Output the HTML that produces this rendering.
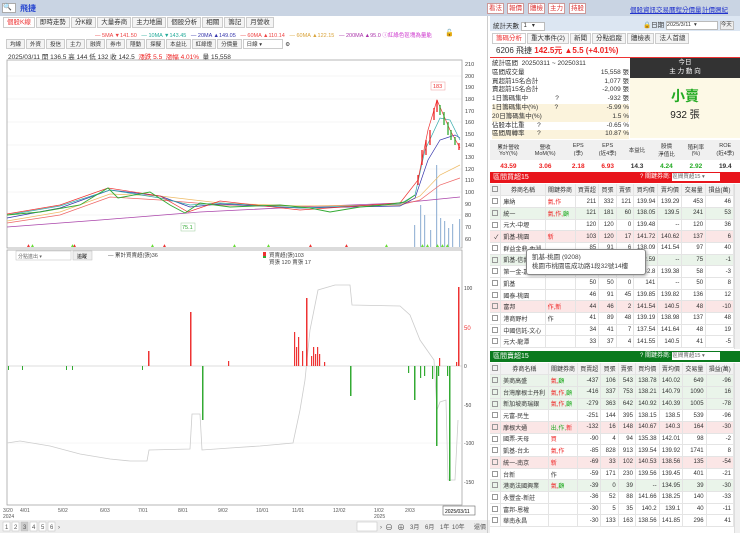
<!DOCTYPE html>
<html><head><meta charset="utf-8"><style>
*{box-sizing:border-box;margin:0;padding:0}
body{width:740px;height:533px;overflow:hidden;background:#fff;font-family:"Liberation Sans","Noto Sans CJK TC",sans-serif;font-size:7px;color:#333;position:relative}
.a{position:absolute}
.btn{position:absolute;top:3px;height:11px;border:1px solid #c99;background:#fff;color:#d33;font-size:6.5px;line-height:9px;text-align:center}
.lk{position:absolute;top:4px;color:#23c;text-decoration:underline;font-size:6.5px}
.tab{display:inline-block;border:1px solid #ccc;background:#f4f4f4;padding:0 3px;height:11px;line-height:10px;font-size:6.5px;margin-right:1px}
table{border-collapse:collapse;width:100%}
td{height:11.7px;font-size:6px;border-right:1px solid #e4e4e4;border-bottom:1px solid #e4e4e4;text-align:right;padding:0 2px;white-space:nowrap}
td.l{text-align:left}
tr.h td{background:#f2f2f2;text-align:center}
.cb{display:inline-block;width:6px;height:6px;border:1px solid #999;vertical-align:middle}
.g{background:#eaf4ea}.p{background:#fbe6e6}
.r{color:#e22}.gr{color:#2a2}
</style></head><body>
<!-- top bar -->
<div class="a" style="left:0;top:0;width:740px;height:16px;background:#c9d4e3"></div>
<div class="a" style="left:2px;top:3px;width:14px;height:10px;background:#fff;border:1px solid #aaa;font-size:7px;line-height:8px">🔍</div>
<div class="a" style="left:20px;top:3px;color:#2746d0;font-size:8px;font-weight:bold">飛捷</div>
<div class="btn" style="left:487px;width:17px">看法</div>
<div class="btn" style="left:507px;width:17px">報價</div>
<div class="btn" style="left:528px;width:17px">體檢</div>
<div class="btn" style="left:548px;width:17px">主力</div>
<div class="btn" style="left:569px;width:17px">持股</div>
<div class="lk" style="left:630px">個股資訊</div>
<div class="lk" style="left:656px">交易曆程</div>
<div class="lk" style="left:682px">分價量</div>
<div class="lk" style="left:702px">計價週紀</div>

<!-- left tabs -->
<div class="a" style="left:3px;top:17px;white-space:nowrap">
<span class="tab" style="background:#fff;color:#e33">個股K線</span><span class="tab">即時走勢</span><span class="tab">分K線</span><span class="tab">大量券商</span><span class="tab">主力地圖</span><span class="tab">個股分析</span><span class="tab">相關</span><span class="tab">籌記</span><span class="tab">月營收</span></div>
<div class="a" style="left:95px;top:31px;font-size:5.5px;white-space:nowrap"><span style="color:#e44">— 5MA ▼141.50</span> &nbsp; <span style="color:#2a9">— 10MA ▼143.45</span> &nbsp; <span style="color:#33a">— 20MA ▲149.05</span> &nbsp; <span style="color:#e44">— 60MA ▲110.14</span> &nbsp; <span style="color:#d9a33a">— 60MA ▲122.15</span> &nbsp; <span style="color:#a3a">— 200MA ▲95.0</span> <span style="color:#c3c">ⓘ紅綠色區塊為量能</span></div>
<div class="a" style="left:111px;top:30px;width:0"></div>
<div class="a" style="left:445px;top:29px;font-size:7px">🔓</div>
<div class="a" style="left:6px;top:39px;white-space:nowrap;font-size:5.5px">
<span class="tab" style="height:10px;font-size:5.5px">均線</span><span class="tab" style="height:10px;font-size:5.5px">外資</span><span class="tab" style="height:10px;font-size:5.5px">投信</span><span class="tab" style="height:10px;font-size:5.5px">主力</span><span class="tab" style="height:10px;font-size:5.5px">融資</span><span class="tab" style="height:10px;font-size:5.5px">券市</span><span class="tab" style="height:10px;font-size:5.5px">隱動</span><span class="tab" style="height:10px;font-size:5.5px">探擬</span><span class="tab" style="height:10px;font-size:5.5px">本益比</span><span class="tab" style="height:10px;font-size:5.5px">紅綠燈</span><span class="tab" style="height:10px;font-size:5.5px">分價量</span><span class="tab" style="height:10px;font-size:5.5px;width:40px;background:#fff">日線 ▾</span> ⚙</div>
<div class="a" style="left:8px;top:51px;font-size:6.5px;white-space:nowrap">2025/03/11 開 136.5 高 144 低 132 收 142.5 &nbsp;<span class="r">漲跌 5.5 &nbsp;漲幅 4.01%</span> &nbsp;量 15,558</div>

<!-- charts -->
<svg class="a" style="left:0;top:58px" width="490" height="475" viewBox="0 58 490 475">
<g stroke="#eee" stroke-width="0.6">
<line x1="7" y1="76" x2="462" y2="76"/><line x1="7" y1="99" x2="462" y2="99"/><line x1="7" y1="122" x2="462" y2="122"/><line x1="7" y1="145" x2="462" y2="145"/><line x1="7" y1="169" x2="462" y2="169"/><line x1="7" y1="192" x2="462" y2="192"/><line x1="7" y1="215" x2="462" y2="215"/>
</g>
<rect x="7" y="60" width="455" height="188" fill="none" stroke="#999" stroke-width="0.7"/>
<g font-size="5.5" fill="#444">
<text x="465" y="66">210</text><text x="465" y="78">200</text><text x="465" y="89">190</text><text x="465" y="101">180</text><text x="465" y="113">170</text><text x="465" y="124">160</text><text x="465" y="136">150</text><text x="465" y="147">140</text><text x="465" y="159">130</text><text x="465" y="171">120</text><text x="465" y="182">110</text><text x="465" y="194">100</text><text x="465" y="206">90</text><text x="465" y="217">80</text><text x="465" y="229">70</text><text x="465" y="241">60</text>
</g>
<!-- volume bars -->
<g fill="#9cb8d8"><rect x="414" y="225" width="1.2" height="22"/><rect x="420" y="205" width="1.2" height="42"/><rect x="424" y="215" width="1.2" height="32"/><rect x="436" y="165" width="1.2" height="82"/><rect x="440" y="218" width="1.2" height="29"/><rect x="444" y="221" width="1.2" height="26"/><rect x="448" y="228" width="1.2" height="19"/><rect x="452" y="224" width="1.2" height="23"/><rect x="459" y="219" width="1.2" height="28"/><rect x="430" y="230" width="1.2" height="17"/></g>
<!-- MAs -->
<polyline fill="none" stroke="#a4a" stroke-width="0.8" points="7,227 100,220 200,212 300,207 400,203 430,200 460,197"/>
<polyline fill="none" stroke="#e66" stroke-width="0.7" points="7,223 60,215 110,197 160,200 220,205 300,206 400,205 420,200 440,185 460,178"/>
<polyline fill="none" stroke="#eb6" stroke-width="0.7" points="7,221 60,212 110,194 160,196 220,203 300,206 400,205 420,196 440,175 460,165"/>
<polyline fill="none" stroke="#33a" stroke-width="0.7" points="7,218 60,208 110,190 160,196 190,207 220,204 300,208 400,206 415,198 428,160 440,140 455,135 460,138"/>
<polyline fill="none" stroke="#3aa" stroke-width="0.7" points="7,215 60,206 110,190 160,198 190,205 220,203 300,208 400,204 415,195 425,150 440,118 450,120 460,140"/>
<polyline fill="none" stroke="#e33" stroke-width="0.7" points="7,214 60,205 108,188 160,196 188,212 220,201 300,210 400,203 418,180 428,130 437,100 450,130 460,148"/>
<!-- candles -->
<g stroke-width="1.3">
<polyline fill="none" stroke="#3a3" stroke-width="0.9" points="7,215 40,212 80,205 108,188 118,198 150,192 170,205 185,213 200,203 230,207 280,205 310,208 330,212 360,207 385,205 405,202 415,195"/>
<line x1="418" x2="418" y1="185" y2="175" stroke="#e22"/><line x1="422" x2="422" y1="165" y2="150" stroke="#e22"/><line x1="426" x2="426" y1="155" y2="140" stroke="#e22"/><line x1="430" x2="430" y1="145" y2="130" stroke="#e22"/><line x1="434" x2="434" y1="120" y2="108" stroke="#e22"/><line x1="437" x2="437" y1="112" y2="100" stroke="#e22"/><line x1="440" x2="440" y1="105" y2="115" stroke="#3a3"/><line x1="444" x2="444" y1="112" y2="125" stroke="#3a3"/><line x1="448" x2="448" y1="122" y2="135" stroke="#3a3"/><line x1="451" x2="451" y1="130" y2="140" stroke="#3a3"/><line x1="455" x2="455" y1="137" y2="145" stroke="#3a3"/><line x1="459" x2="459" y1="143" y2="150" stroke="#e22"/>
</g>
<rect x="431" y="82" width="14" height="8" fill="#fff" stroke="#e99" stroke-width="0.5"/><text x="433" y="88" font-size="5.5" fill="#e33">183</text>
<rect x="181" y="223" width="14" height="8" fill="#fff" stroke="#9c9" stroke-width="0.5"/><text x="182" y="229" font-size="5.5" fill="#3a3">75.1</text>
<g font-size="5" fill="#e33"><text x="26" y="247">▲</text><text x="72" y="247">▲</text><text x="162" y="247">▲</text><text x="308" y="247">▲</text><text x="344" y="247">▲</text></g>
<g font-size="5" fill="#6d3"><text x="30" y="247">▲</text><text x="70" y="247">▲</text><text x="150" y="247">▲</text><text x="232" y="247">▲</text><text x="266" y="247">▲</text><text x="384" y="247">▲</text><text x="420" y="247">▲▲</text><text x="435" y="247">▲▲▲</text></g>
<!-- lower chart -->
<rect x="7" y="250" width="455" height="255" fill="none" stroke="#999" stroke-width="0.7"/>
<line x1="7" y1="366" x2="462" y2="366" stroke="#bbb" stroke-width="0.5"/>
<line x1="7" y1="443" x2="462" y2="443" stroke="#eee" stroke-width="0.5"/>
<polyline fill="none" stroke="#ccc" stroke-width="0.8" points="7,443 20,441 50,446 80,454 110,459 130,461 147,461 149,450 190,449 192,414 200,414 202,450 230,448 260,446 293,443 300,410 305,380 310,330 318,290 335,285 350,285 352,305 400,306 410,315 420,340 434,360 437,410 440,402 446,400 448,480 455,480 458,420"/>
<g fill="#e33"><rect x="148" y="351" width="1.5" height="15"/><rect x="190" y="312" width="1.5" height="54"/><rect x="228" y="361" width="1.2" height="5"/><rect x="294" y="332" width="1.2" height="34"/><rect x="296" y="347" width="1.2" height="19"/><rect x="298" y="337" width="1.2" height="29"/><rect x="302" y="351" width="1.2" height="15"/><rect x="306" y="298" width="1.5" height="68"/><rect x="311" y="356" width="1.2" height="10"/><rect x="313" y="347" width="1.2" height="19"/><rect x="315" y="354" width="1.2" height="12"/><rect x="317" y="347" width="1.2" height="19"/><rect x="319" y="354" width="1.2" height="12"/><rect x="324" y="362" width="1.2" height="4"/><rect x="439" y="358" width="1.2" height="8"/><rect x="458" y="287" width="1.5" height="79"/><rect x="456" y="362" width="1.2" height="4"/></g>
<g fill="#3a3"><rect x="202" y="366" width="1.5" height="54"/><rect x="350" y="366" width="1.5" height="30"/><rect x="408" y="366" width="1.2" height="7"/><rect x="414" y="366" width="1.5" height="34"/><rect x="420" y="366" width="1.2" height="12"/><rect x="424" y="366" width="1.2" height="10"/><rect x="432" y="366" width="1.2" height="13"/><rect x="436" y="366" width="1.5" height="80"/><rect x="438" y="366" width="1.2" height="10"/><rect x="449" y="366" width="1.5" height="115"/><rect x="447" y="366" width="1.2" height="10"/><rect x="8" y="366" width="1" height="4"/><rect x="22" y="366" width="1" height="4"/><rect x="66" y="366" width="1" height="4"/><rect x="72" y="366" width="1" height="4"/><rect x="142" y="366" width="1" height="4"/></g>
<g font-size="5" fill="#444"><text x="464" y="290">100</text><text x="464" y="330" fill="#e33" font-size="6">50</text><text x="464" y="368">0</text><text x="464" y="407">-50</text><text x="464" y="445">-100</text><text x="464" y="484">-150</text></g>
<rect x="16" y="251" width="55" height="9" fill="#fff" stroke="#bbb" stroke-width="0.5"/><text x="18" y="258" font-size="5" fill="#666">分點進出 ▾</text>
<rect x="73" y="251" width="19" height="9" fill="#eee" stroke="#bbb" stroke-width="0.5"/><text x="77" y="258" font-size="5">追蹤</text>
<text x="108" y="257" font-size="5.5" fill="#444">— 累計買賣超(張)36</text>
<rect x="263" y="252" width="3" height="5" fill="#e33"/><rect x="263" y="256" width="3" height="2" fill="#3a3"/>
<text x="269" y="257" font-size="5.5" fill="#444">買賣超(張)103</text><text x="269" y="264" font-size="5.5" fill="#444">買張 120 賣張 17</text>
<g font-size="5" fill="#555"><text x="3" y="512">3/20</text><text x="3" y="518">2024</text><text x="20" y="512">4/01</text><text x="58" y="512">5/02</text><text x="100" y="512">6/03</text><text x="138" y="512">7/01</text><text x="178" y="512">8/01</text><text x="218" y="512">9/02</text><text x="256" y="512">10/01</text><text x="292" y="512">11/01</text><text x="333" y="512">12/02</text><text x="374" y="512">1/02</text><text x="374" y="518">2025</text><text x="405" y="512">2/03</text></g>
<rect x="443" y="506" width="32" height="9" fill="#fff" stroke="#666" stroke-width="0.6"/><text x="445" y="513" font-size="5">2025/03/11</text>
<rect x="0" y="520" width="490" height="13" fill="#eee"/>
<g font-size="6" fill="#555"><rect x="3" y="522" width="7" height="9" fill="#fff" stroke="#bbb" stroke-width="0.5"/><text x="5" y="529">1</text><rect x="12" y="522" width="7" height="9" fill="#fff" stroke="#bbb" stroke-width="0.5"/><text x="14" y="529">2</text><rect x="21" y="522" width="7" height="9" fill="#ccc" stroke="#bbb" stroke-width="0.5"/><text x="23" y="529">3</text><rect x="30" y="522" width="7" height="9" fill="#fff" stroke="#bbb" stroke-width="0.5"/><text x="32" y="529">4</text><rect x="39" y="522" width="7" height="9" fill="#fff" stroke="#bbb" stroke-width="0.5"/><text x="41" y="529">5</text><rect x="48" y="522" width="7" height="9" fill="#fff" stroke="#bbb" stroke-width="0.5"/><text x="50" y="529">6</text><text x="58" y="529">›</text>
<rect x="357" y="522" width="20" height="9" fill="#fff" stroke="#bbb" stroke-width="0.5"/><text x="380" y="529">›</text><text x="385" y="530" font-size="8">⊖</text><text x="397" y="530" font-size="8">⊕</text><text x="410" y="529">3月</text><text x="425" y="529">6月</text><text x="440" y="529">1年</text><text x="452" y="529">10年</text><text x="474" y="529">還價</text></g>
</svg>
<div class="a" style="left:487px;top:16px;width:1px;height:517px;background:#ccc"></div>

<!-- right panel -->
<div class="a" style="left:490px;top:16px;width:250px;height:15px;background:#dce6f2"></div>
<div class="a" style="left:493px;top:20px;font-size:6.5px">統計天數 <span style="display:inline-block;width:24px;height:9px;background:#fff;border:1px solid #bbb;font-size:6px;vertical-align:middle;line-height:7px">&nbsp;1 &nbsp; ▾</span></div>
<div class="a" style="left:643px;top:19px;font-size:6.5px">🔒日期 <span style="display:inline-block;width:52px;height:9px;background:#fff;border:1px solid #bbb;font-size:5.5px;vertical-align:middle;line-height:7px">2025/3/11 &nbsp;▾</span> <span style="display:inline-block;width:14px;height:9px;background:#eee;border:1px solid #bbb;font-size:5.5px;vertical-align:middle;line-height:7px">今天</span></div>
<div class="a" style="left:492px;top:33px;white-space:nowrap"><span class="tab" style="background:#fff;color:#e33">籌碼分析</span><span class="tab">重大事件(2)</span><span class="tab">新聞</span><span class="tab">分點追蹤</span><span class="tab">體檢表</span><span class="tab">法人首總</span></div>
<div class="a" style="left:490px;top:45px;width:250px;height:13px;border-bottom:1.5px solid #e33;font-size:8px;padding-left:6px;line-height:12px">6206 飛捷 <span class="r" style="font-weight:bold">142.5元 ▲5.5 (+4.01%)</span></div>
<div class="a" style="left:492px;top:60px;width:137px;font-size:6.5px;line-height:8.8px">
<div>統計區間 &nbsp;20250311 ~ 20250311</div>
<div style="display:flex;justify-content:space-between"><span>區間成交量</span><span>15,558 張</span></div>
<div style="display:flex;justify-content:space-between"><span>買超前15名合計</span><span>1,077 張</span></div>
<div style="display:flex;justify-content:space-between"><span>賣超前15名合計</span><span>-2,009 張</span></div>
<div style="display:flex;justify-content:space-between"><span>1日籌碼集中 &nbsp; &nbsp; &nbsp; &nbsp; &nbsp; &nbsp; &nbsp; ?</span><span>-932 張</span></div>
<div style="display:flex;justify-content:space-between;background:#fbf3dc"><span>1日籌碼集中(%) &nbsp; &nbsp; &nbsp; &nbsp; ?</span><span>-5.99 %</span></div>
<div style="display:flex;justify-content:space-between;background:#fbf3dc"><span>20日籌碼集中(%)</span><span>1.5 %</span></div>
<div style="display:flex;justify-content:space-between"><span>佔股本比重 &nbsp; &nbsp; &nbsp; ?</span><span>-0.65 %</span></div>
<div style="display:flex;justify-content:space-between;background:#fbf3dc"><span>區間周轉率 &nbsp; &nbsp; &nbsp; ?</span><span>10.87 %</span></div>
</div>
<div class="a" style="left:630px;top:58px;width:110px;height:20px;background:#333;color:#fff;text-align:center;font-size:6.5px;line-height:9px">今日<br>主 力 動 向</div>
<div class="a" style="left:630px;top:78px;width:110px;height:60px;background:#fdf9e6;text-align:center"><div style="color:#2a2;font-size:14px;font-weight:bold;margin-top:8px">小賣</div><div style="font-size:10px;color:#222">932 張</div></div>
<div class="a" style="left:490px;top:140px;width:250px;height:32px;font-size:5.5px">
<div style="display:flex;height:20px;background:#f0f0f0;text-align:center;align-items:center"><div style="flex:1">累計營收<br>YoY(%)</div><div style="flex:1">營收<br>MoM(%)</div><div style="flex:.8">EPS<br>(季)</div><div style="flex:.8">EPS<br>(近4季)</div><div style="flex:.8">本益比</div><div style="flex:.8">股價<br>淨值比</div><div style="flex:.8">殖利率<br>(%)</div><div style="flex:.8">ROE<br>(近4季)</div></div>
<div style="display:flex;height:12px;text-align:center;align-items:center;font-size:6.5px;font-weight:bold"><div style="flex:1" class="r">43.59</div><div style="flex:1" class="r">3.06</div><div style="flex:.8" class="r">2.18</div><div style="flex:.8" class="r">6.93</div><div style="flex:.8">14.3</div><div style="flex:.8" class="gr">4.24</div><div style="flex:.8" class="gr">2.92</div><div style="flex:.8">19.4</div></div></div>
<div class="a" style="left:490px;top:172px;width:250px;height:11px;background:#e8141b;color:#fff;font-size:7px;line-height:11px;padding-left:3px">區間買超15<span style="position:absolute;left:150px;font-size:6px">? 關鍵券商: <span style="display:inline-block;width:48px;height:8px;background:#fff;color:#666;font-size:5.5px;line-height:8px">區間買超15 ▾</span></span></div>
<div class="a" style="left:490px;top:184px;width:244px">
<table>
<tr class="h"><td><span class="cb"></span></td><td>券商名稱</td><td>關鍵券商</td><td>買賣超</td><td>買張</td><td>賣張</td><td>買均價</td><td>賣均價</td><td>交易量</td><td>損益(萬)</td></tr>
<tr><td><span class="cb"></span></td><td class="l">庫納</td><td class="l r">氣,作</td><td>211</td><td>332</td><td>121</td><td>139.94</td><td>139.29</td><td>453</td><td>46</td></tr>
<tr class="g"><td><span class="cb"></span></td><td class="l">統一</td><td class="l r">氣,作,<span class="gr">顧</span></td><td>121</td><td>181</td><td>60</td><td>138.05</td><td>139.5</td><td>241</td><td>53</td></tr>
<tr><td><span class="cb"></span></td><td class="l">元大-中壢</td><td></td><td>120</td><td>120</td><td>0</td><td>139.48</td><td>--</td><td>120</td><td>36</td></tr>
<tr class="p"><td>✓</td><td class="l">凱基-桃園</td><td class="l r">新</td><td>103</td><td>120</td><td>17</td><td>141.72</td><td>140.62</td><td>137</td><td>6</td></tr>
<tr><td><span class="cb"></span></td><td class="l">群益金鼎-內湖</td><td></td><td>85</td><td>91</td><td>6</td><td>138.09</td><td>141.54</td><td>97</td><td>40</td></tr>
<tr class="g"><td><span class="cb"></span></td><td class="l">凱基-信義</td><td></td><td>75</td><td>75</td><td>0</td><td>142.59</td><td>--</td><td>75</td><td>-1</td></tr>
<tr><td><span class="cb"></span></td><td class="l">第一金-嘉義</td><td></td><td>54</td><td>56</td><td>2</td><td>142.8</td><td>139.38</td><td>58</td><td>-3</td></tr>
<tr><td><span class="cb"></span></td><td class="l">凱基</td><td></td><td>50</td><td>50</td><td>0</td><td>141</td><td>--</td><td>50</td><td>8</td></tr>
<tr><td><span class="cb"></span></td><td class="l">國泰-桃園</td><td></td><td>46</td><td>91</td><td>45</td><td>139.85</td><td>139.82</td><td>136</td><td>12</td></tr>
<tr class="p"><td><span class="cb"></span></td><td class="l">富邦</td><td class="l r">作,<span>新</span></td><td>44</td><td>46</td><td>2</td><td>141.54</td><td>140.5</td><td>48</td><td>-10</td></tr>
<tr><td><span class="cb"></span></td><td class="l">港商野村</td><td class="l">作</td><td>41</td><td>89</td><td>48</td><td>139.19</td><td>138.98</td><td>137</td><td>48</td></tr>
<tr><td><span class="cb"></span></td><td class="l">中國信託-文心</td><td></td><td>34</td><td>41</td><td>7</td><td>137.54</td><td>141.64</td><td>48</td><td>19</td></tr>
<tr><td><span class="cb"></span></td><td class="l">元大-龍潭</td><td></td><td>33</td><td>37</td><td>4</td><td>141.55</td><td>140.5</td><td>41</td><td>-5</td></tr>
</table></div>
<div class="a" style="left:526px;top:249px;width:120px;height:26px;background:#fff;border:1px solid #888;border-radius:3px;box-shadow:1px 1px 3px #aaa;font-size:6.5px;padding:3px 5px;line-height:9px;color:#444">凱基-桃園 (9208)<br>桃園市桃園區成功路1段32號14樓</div>
<div class="a" style="left:490px;top:351px;width:250px;height:11px;background:#0a7a1e;color:#fff;font-size:7px;line-height:11px;padding-left:3px">區間賣超15<span style="position:absolute;left:150px;font-size:6px">? 關鍵券商: <span style="display:inline-block;width:48px;height:8px;background:#fff;color:#666;font-size:5.5px;line-height:8px">區間賣超15 ▾</span></span></div>
<div class="a" style="left:490px;top:363px;width:244px">
<table>
<tr class="h"><td><span class="cb"></span></td><td>券商名稱</td><td>關鍵券商</td><td>買賣超</td><td>買張</td><td>賣張</td><td>買均價</td><td>賣均價</td><td>交易量</td><td>損益(萬)</td></tr>
<tr class="g"><td><span class="cb"></span></td><td class="l">美商高盛</td><td class="l r">氣,<span class="gr">顧</span></td><td>-437</td><td>106</td><td>543</td><td>138.78</td><td>140.02</td><td>649</td><td>-96</td></tr>
<tr class="g"><td><span class="cb"></span></td><td class="l">台灣摩根士丹利</td><td class="l r">氣,作,<span class="gr">顧</span></td><td>-416</td><td>337</td><td>753</td><td>138.21</td><td>140.79</td><td>1090</td><td>16</td></tr>
<tr class="g"><td><span class="cb"></span></td><td class="l">新加坡商瑞銀</td><td class="l r">氣,作,<span class="gr">顧</span></td><td>-279</td><td>363</td><td>642</td><td>140.92</td><td>140.39</td><td>1005</td><td>-78</td></tr>
<tr><td><span class="cb"></span></td><td class="l">元富-民生</td><td></td><td>-251</td><td>144</td><td>395</td><td>138.15</td><td>138.5</td><td>539</td><td>-96</td></tr>
<tr class="p"><td><span class="cb"></span></td><td class="l">摩根大通</td><td class="l gr">出,作,<span class="r">新</span></td><td>-132</td><td>16</td><td>148</td><td>140.67</td><td>140.3</td><td>164</td><td>-30</td></tr>
<tr><td><span class="cb"></span></td><td class="l">國票-天母</td><td class="l r">買</td><td>-90</td><td>4</td><td>94</td><td>135.38</td><td>142.01</td><td>98</td><td>-2</td></tr>
<tr><td><span class="cb"></span></td><td class="l">凱基-台北</td><td class="l r">氣,作</td><td>-85</td><td>828</td><td>913</td><td>139.54</td><td>139.92</td><td>1741</td><td>8</td></tr>
<tr class="p"><td><span class="cb"></span></td><td class="l">統一-南京</td><td class="l r">新</td><td>-69</td><td>33</td><td>102</td><td>140.53</td><td>138.56</td><td>135</td><td>-54</td></tr>
<tr><td><span class="cb"></span></td><td class="l">台新</td><td class="l">作</td><td>-59</td><td>171</td><td>230</td><td>139.56</td><td>139.45</td><td>401</td><td>-21</td></tr>
<tr class="g"><td><span class="cb"></span></td><td class="l">港商法國興業</td><td class="l r">氣,<span class="gr">顧</span></td><td>-39</td><td>0</td><td>39</td><td>--</td><td>134.95</td><td>39</td><td>-30</td></tr>
<tr><td><span class="cb"></span></td><td class="l">永豐金-新莊</td><td></td><td>-36</td><td>52</td><td>88</td><td>141.66</td><td>138.25</td><td>140</td><td>-33</td></tr>
<tr><td><span class="cb"></span></td><td class="l">富邦-恩權</td><td></td><td>-30</td><td>5</td><td>35</td><td>140.2</td><td>139.1</td><td>40</td><td>-11</td></tr>
<tr><td><span class="cb"></span></td><td class="l">華南永昌</td><td></td><td>-30</td><td>133</td><td>163</td><td>138.56</td><td>141.85</td><td>296</td><td>41</td></tr>
</table></div>
<div class="a" style="left:734px;top:184px;width:6px;height:165px;background:#f0f0f0;border-left:1px solid #ddd"></div>
<div class="a" style="left:734px;top:363px;width:6px;height:170px;background:#f0f0f0;border-left:1px solid #ddd"></div>
</body></html>
